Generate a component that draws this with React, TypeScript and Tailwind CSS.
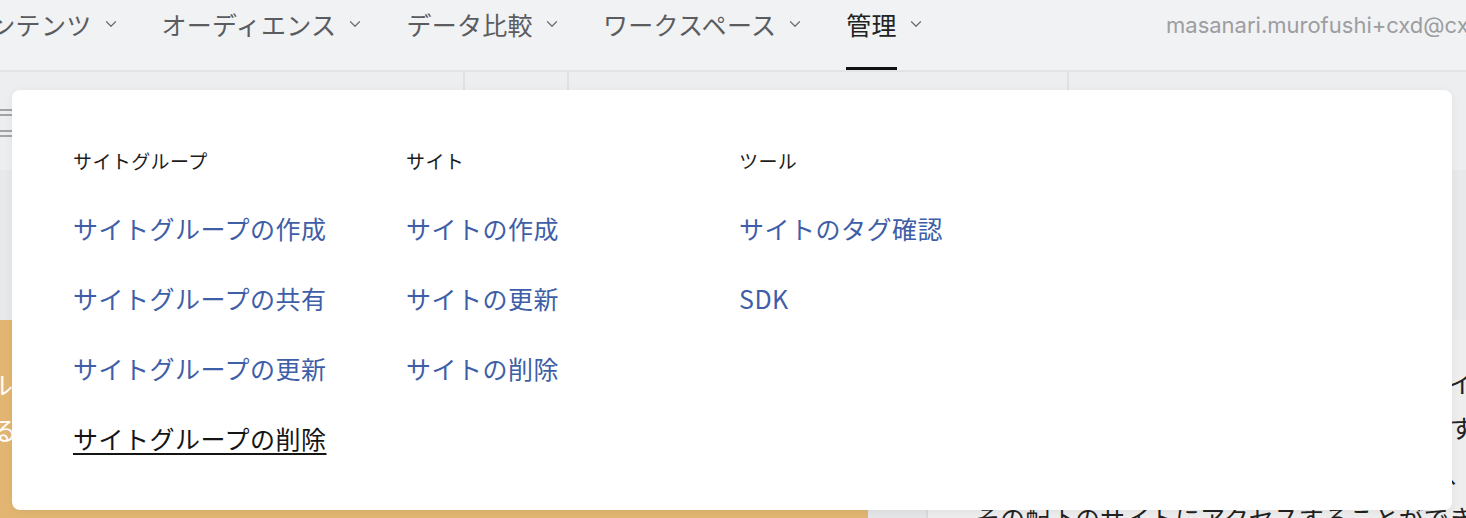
import { ChevronDown } from "lucide-react";

const navItems = [
  { label: "コンテンツ", active: false },
  { label: "オーディエンス", active: false },
  { label: "データ比較", active: false },
  { label: "ワークスペース", active: false },
  { label: "管理", active: true }
];

const menuColumns = [
  {
    title: "サイトグループ",
    links: [
      "サイトグループの作成",
      "サイトグループの共有",
      "サイトグループの更新",
      "サイトグループの削除"
    ]
  },
  {
    title: "サイト",
    links: ["サイトの作成", "サイトの更新", "サイトの削除"]
  },
  {
    title: "ツール",
    links: ["サイトのタグ確認", "SDK"]
  }
];

const hovered = "サイトグループの削除";

const NavBar = () => (
  <header className="flex h-[72px] items-stretch border-b-2 border-[#e3e4e6] bg-[#f1f2f4]">
    <nav className="ml-[-35px] flex h-full items-stretch">
      {navItems.map((item) => (
        <div key={item.label} className="mr-[42px] flex h-full items-start">
          <span
            className={`h-full pt-[9px] text-[25px] leading-[30px] tracking-[0.3px] ${
              item.active
                ? "border-b-[3px] border-[#111] text-[#222]"
                : "border-b-[3px] border-transparent text-[#5a5c60]"
            }`}
          >
            {item.label}
          </span>
          <ChevronDown
            className="ml-[10px] mt-[15px] text-[#6b6d70]"
            size={18}
            strokeWidth={1.6}
          />
        </div>
      ))}
    </nav>
    <div className="ml-auto w-[300px] overflow-hidden whitespace-nowrap pt-[10px] font-['Inter',sans-serif] text-[22px] leading-[30px] text-[#9c9da0]">
      masanari.murofushi+cxd@cxense.com
    </div>
  </header>
);

const Toolbar = () => (
  <div className="flex h-[98px] bg-[#eceef0]">
    <div className="flex w-[463px] flex-col pt-[37px]">
      <div className="h-[2px] w-[14px] bg-[#a3a4a7]" />
      <div className="mt-[3px] h-[2px] w-[14px] bg-[#a3a4a7]" />
      <div className="mt-[14px] h-[2px] w-[14px] bg-[#a3a4a7]" />
      <div className="mt-[3px] h-[2px] w-[14px] bg-[#a3a4a7]" />
    </div>
    <div className="w-[104px] border-l-2 border-[#e0e1e3]" />
    <div className="w-[500px] border-l-2 border-[#e0e1e3]" />
    <div className="flex-1 border-l-2 border-[#e0e1e3]" />
  </div>
);

const Background = () => (
  <>
    <NavBar />
    <Toolbar />
    <div className="h-[150px] bg-[#e8e9eb]" />
    <div className="flex h-[200px]">
      <div className="w-[868px] shrink-0 overflow-hidden bg-[#e2b672] pt-[42px] text-[25px] leading-[45px] text-white">
        <p className="ml-[-12px] whitespace-nowrap">ルールを設定して、サイトグループを管理します</p>
        <p className="ml-[-8px] whitespace-nowrap">るサイトの一覧を確認できます</p>
      </div>
      <div className="w-[60px] shrink-0 border-r-2 border-[#d9dadc] bg-[#e5e6e8]" />
      <div className="min-w-0 flex-1 overflow-hidden bg-[#eeeeef] pl-[47px] pt-[40px] text-[25px] leading-[45px] text-[#222]">
        <p className="whitespace-nowrap">サイトグループを新規作成すると複数のサイトを</p>
        <p className="whitespace-nowrap">を一つにまとめて管理できるようになります。</p>
        <p className="whitespace-nowrap">各サイトグループにはメンバーを招待でき、</p>
        <p className="whitespace-nowrap">その配下のサイトにアクセスすることができます。</p>
      </div>
    </div>
  </>
);

const DropdownMenu = () => (
  <div className="absolute left-[12px] top-[90px] flex h-[420px] w-[1440px] rounded-[8px] bg-white pl-[61px] pt-[57px] shadow-[0_2px_10px_rgba(0,0,0,0.06)]">
    {menuColumns.map((col) => (
      <div key={col.title} className="flex w-[333px] flex-col">
        <div className="h-[28px] text-[19px] leading-[28px] tracking-[0.4px] text-[#1c1c1c]">
          {col.title}
        </div>
        <div className="mt-[18px] flex flex-col">
          {col.links.map((link) => (
            <div key={link} className="flex h-[70px] items-center">
              <a
                href="#"
                className={`text-[25px] leading-[36px] tracking-[0.5px] ${
                  link === hovered
                    ? "text-[#151515] underline decoration-2 underline-offset-[4px]"
                    : "text-[#3e5ea7]"
                }`}
              >
                {link}
              </a>
            </div>
          ))}
        </div>
      </div>
    ))}
  </div>
);

export default function App() {
  return (
    <div className="relative h-[518px] w-[1466px] overflow-hidden bg-[#e8e9eb] font-['Noto_Sans_CJK_JP',sans-serif]">
      <Background />
      <DropdownMenu />
    </div>
  );
}
